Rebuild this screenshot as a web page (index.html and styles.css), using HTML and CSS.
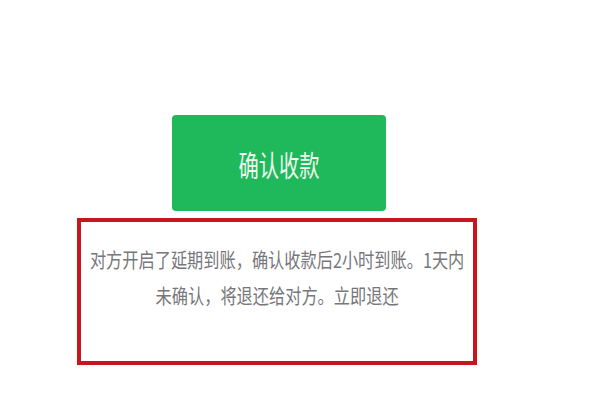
FILE: index.html
```html
<!DOCTYPE html>
<html lang="zh-CN">
<head>
<meta charset="utf-8">
<link rel="stylesheet" href="styles.css">
</head>
<body>
<div class="page">
  <div class="btn"><span class="btn-label">确认收款</span></div>
  <div class="notice">
    <div class="notice-text">
      <div class="line">对方开启了延期到账，确认收款后2小时到账。1天内</div>
      <div class="line">未确认，将退还给对方。立即退还</div>
    </div>
  </div>
</div>
</body>
</html>
```

FILE: styles.css
```css
html, body {
  margin: 0;
  padding: 0;
  background: #ffffff;
}
body {
  width: 600px;
  height: 400px;
  overflow: hidden;
  font-family: "Noto Sans CJK SC", "Noto Sans", sans-serif;
}
.page {
  display: flex;
  flex-direction: column;
  padding-top: 115px;
}
.btn {
  margin-left: 172px;
  width: 214px;
  height: 96px;
  background: #1fb85a;
  border-radius: 4px;
  display: flex;
  align-items: center;
  justify-content: center;
}
.btn-label {
  display: inline-block;
  color: #eef8f1;
  font-size: 29px;
  line-height: 1;
  white-space: nowrap;
  transform: scaleX(0.7);
  margin-top: 2px;
}
.notice {
  margin-top: 7px;
  margin-left: 77px;
  width: 400px;
  height: 147px;
  box-sizing: border-box;
  border: 4px solid #c9161d;
  display: flex;
  justify-content: center;
  align-items: flex-start;
  padding-top: 20px;
}
.notice-text {
  flex: none;
  width: max-content;
  transform: scaleX(0.81);
  color: #76767b;
  font-size: 20px;
  line-height: 36px;
  text-align: center;
  white-space: nowrap;
}
```
